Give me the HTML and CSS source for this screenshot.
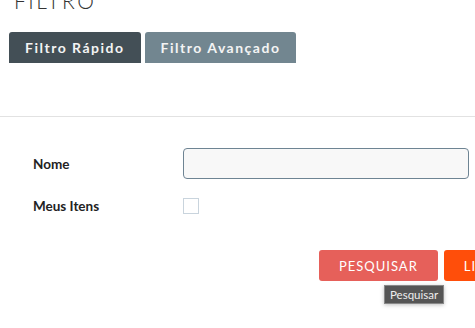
FILE: index.html
```html
<!DOCTYPE html>
<html lang="pt-BR">
<head>
    <meta charset="UTF-8">
    <title>Filtro</title>
    <link rel="stylesheet" href="styles.css">
</head>
<body>
    <div class="header">
        <div class="title">FILTRO</div>
        <div class="tabs">
            <div class="tab active">Filtro Rápido</div>
            <div class="tab">Filtro Avançado</div>
        </div>
    </div>
    <div class="form">
        <div class="row">
            <label class="label">Nome</label>
            <input class="input" type="text">
        </div>
        <div class="row">
            <label class="label">Meus Itens</label>
            <span class="check"></span>
        </div>
    </div>
    <div class="actions">
        <div class="btn-wrap">
            <button class="btn search">PESQUISAR</button>
            <div class="tooltip">Pesquisar</div>
        </div>
        <button class="btn clear">LIMPAR</button>
    </div>
</body>
</html>
```
FILE: styles.css
```css
html {
    overflow: hidden;
}
body {
    margin: 0;
    padding: 0;
    min-height: 328px;
    font-family: 'Lato', sans-serif;
    background: #fff;
    color: #222;
}
.header {
    padding-left: 9px;
    border-bottom: 1px solid #e2e2e2;
    height: 127px;
    margin-top: -11px;
}
.title {
    font-size: 21px;
    font-weight: 300;
    letter-spacing: 2.5px;
    color: #333;
    line-height: 24px;
    padding-left: 5px;
}
.tabs {
    display: flex;
    gap: 4px;
    margin-top: 19px;
}
.tab {
    height: 31px;
    line-height: 31px;
    padding: 0 16px;
    background: #728690;
    color: #f4f4f4;
    font-size: 14px;
    font-weight: 700;
    letter-spacing: 1.5px;
    border-radius: 3px 3px 0 0;
}
.tab.active {
    background: #434f56;
}
.form {
    padding: 31px 6px 0 33px;
}
.row {
    display: flex;
    align-items: center;
    margin-bottom: 19px;
}
.label {
    width: 150px;
    font-size: 13.5px;
    font-weight: 700;
    color: #222;
}
.input {
    flex: 1;
    height: 31px;
    box-sizing: border-box;
    border: 1px solid #6e8493;
    border-radius: 4px;
    background: #f8f8f8;
}
.check {
    width: 16px;
    height: 16px;
    box-sizing: border-box;
    border: 1px solid #c9d4dd;
}
.actions {
    display: flex;
    gap: 6px;
    padding-left: 319px;
    margin-top: 36px;
}
.btn-wrap {
    position: relative;
}
.btn {
    height: 31px;
    padding: 0 20px;
    border: none;
    border-radius: 3px;
    color: #fff;
    font-family: 'Lato', sans-serif;
    font-size: 13px;
    letter-spacing: 1px;
    flex-shrink: 0;
}
.search {
    background: #e6605a;
}
.clear {
    background: #ff4e0a;
}
.tooltip {
    position: absolute;
    left: 65px;
    top: 35px;
    background: #555;
    color: #eee;
    font-size: 11.5px;
    padding: 2px 5px;
    border: 1px solid #888;
    box-shadow: 0 1px 4px rgba(0, 0, 0, 0.25);
    white-space: nowrap;
}
```
